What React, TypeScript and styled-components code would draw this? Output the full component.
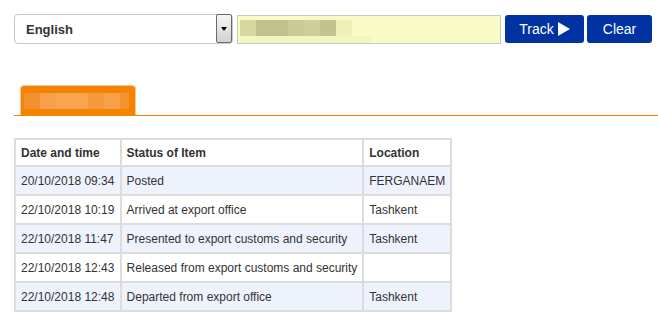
import React from "react";
import styled, { createGlobalStyle } from "styled-components";

const Global = createGlobalStyle`
  html, body { margin: 0; padding: 0; background: #fff; }
  body { font-family: "Liberation Sans", Arial, sans-serif; }
`;

const Page = styled.div`
  padding: 14px 0 0 14px;
  width: 644px;
`;

const Toolbar = styled.div`
  display: flex;
  align-items: flex-start;
  height: 31px;
`;

const SelectBox = styled.div`
  box-sizing: border-box;
  width: 219px;
  height: 30px;
  border: 1px solid #c8c8c8;
  border-radius: 4px;
  display: flex;
  align-items: center;
  justify-content: space-between;
  padding: 0 0 0 11px;
  font-weight: bold;
  font-size: 13px;
  color: #333;
`;

const ArrowButton = styled.div`
  box-sizing: border-box;
  width: 16px;
  height: 29px;
  border: 1px solid #6a6a6a;
  border-radius: 2px;
  background: linear-gradient(#f6f6f6, #d2d2d2);
  display: flex;
  align-items: center;
  justify-content: center;
  margin-top: -1px;
`;

const Caret = styled.div`
  width: 0;
  height: 0;
  border-left: 3.5px solid transparent;
  border-right: 3.5px solid transparent;
  border-top: 4px solid #000;
`;

const TrackInput = styled.div`
  box-sizing: border-box;
  margin: 1px 0 0 4px;
  width: 264px;
  height: 29px;
  border: 1px solid #c8c8c8;
  background: #f8fcc4;
  padding: 4px 0 0 2px;
`;

const BlurRow = styled.div`
  display: flex;
  height: 16px;
`;

const BlurBlock = styled.div<{ $c: string; $w?: number }>`
  width: ${(p) => p.$w ?? 16}px;
  height: 100%;
  background: ${(p) => p.$c};
`;

const BlurBand = styled.div`
  width: 131px;
  height: 7px;
  background: #f2f5c0;
`;

const Button = styled.button<{ $w: number }>`
  box-sizing: border-box;
  margin: 1px 0 0 ${(p) => (p.$w > 70 ? 4 : 3)}px;
  width: ${(p) => p.$w}px;
  height: 28px;
  border: none;
  border-radius: 3px;
  background: #0033a1;
  color: #fff;
  font-family: "Liberation Sans", Arial, sans-serif;
  font-size: 14px;
  display: flex;
  align-items: center;
  justify-content: center;
  gap: 3px;
  padding: 0;
`;

const TabBar = styled.div`
  margin-top: 40px;
  display: flex;
  flex-direction: column;
`;

const TabRow = styled.div`
  display: flex;
  padding-left: 6px;
`;

const TabLine = styled.div`
  height: 1px;
  background: #f58300;
`;

const Tab = styled.div`
  box-sizing: border-box;
  width: 116px;
  height: 30px;
  background: #f58300;
  border: 1px solid #f0c9a0;
  border-bottom: none;
  border-radius: 4px 4px 0 0;
  padding: 7px 0 0 3px;
`;

const Table = styled.table`
  margin-top: 22px;
  border-collapse: separate;
  border-spacing: 0;
  border: 1px solid #dcdcdc;
  width: 438px;
  font-size: 12px;
  color: #333;
`;

const Th = styled.th<{ $w: number }>`
  text-align: left;
  font-weight: bold;
  border: 1px solid #dcdcdc;
  height: 25px;
  padding: 0 0 0 5px;
  width: ${(p) => p.$w}px;
  background: #fff;
`;

const Row = styled.tr<{ $alt: boolean }>`
  background: ${(p) => (p.$alt ? "#eef2fd" : "#fff")};
`;

const Td = styled.td`
  border: 1px solid #dcdcdc;
  height: 27px;
  padding: 0 0 0 5px;
  white-space: nowrap;
`;

const rows = [
  ["20/10/2018 09:34", "Posted", "FERGANAEM"],
  ["22/10/2018 10:19", "Arrived at export office", "Tashkent"],
  ["22/10/2018 11:47", "Presented to export customs and security", "Tashkent"],
  ["22/10/2018 12:43", "Released from export customs and security", ""],
  ["22/10/2018 12:48", "Departed from export office", "Tashkent"],
];

export default function App() {
  return (
    <>
      <Global />
      <Page>
        <Toolbar>
          <SelectBox>
            English
            <ArrowButton>
              <Caret />
            </ArrowButton>
          </SelectBox>
          <TrackInput>
            <BlurRow>
              <BlurBlock $c="#d6d89f" />
              <BlurBlock $c="#bfc28f" $w={32} />
              <BlurBlock $c="#c8cb95" />
              <BlurBlock $c="#cccf99" />
              <BlurBlock $c="#c0c38f" />
              <BlurBlock $c="#eef0b8" />
            </BlurRow>
            <BlurBand />
          </TrackInput>
          <Button $w={79}>
            Track
            <svg width="13" height="14" viewBox="0 0 13 14">
              <path d="M1 0 L13 7 L1 14 Z" fill="#fff" />
            </svg>
          </Button>
          <Button $w={65}>Clear</Button>
        </Toolbar>
        <TabBar>
          <TabRow>
            <Tab>
              <BlurRow>
                <BlurBlock $c="#f3922c" $w={16} />
                <BlurBlock $c="#f6a24c" />
                <BlurBlock $c="#f7a64f" />
                <BlurBlock $c="#f7a54e" />
                <BlurBlock $c="#f49a3c" />
                <BlurBlock $c="#f6a24b" />
                <BlurBlock $c="#f4922e" $w={9} />
              </BlurRow>
            </Tab>
          </TabRow>
          <TabLine />
        </TabBar>
        <Table>
          <thead>
            <tr>
              <Th $w={100}>Date and time</Th>
              <Th $w={237}>Status of Item</Th>
              <Th $w={82}>Location</Th>
            </tr>
          </thead>
          <tbody>
            {rows.map((r, i) => (
              <Row key={i} $alt={i % 2 === 0}>
                <Td>{r[0]}</Td>
                <Td>{r[1]}</Td>
                <Td>{r[2]}</Td>
              </Row>
            ))}
          </tbody>
        </Table>
      </Page>
    </>
  );
}
